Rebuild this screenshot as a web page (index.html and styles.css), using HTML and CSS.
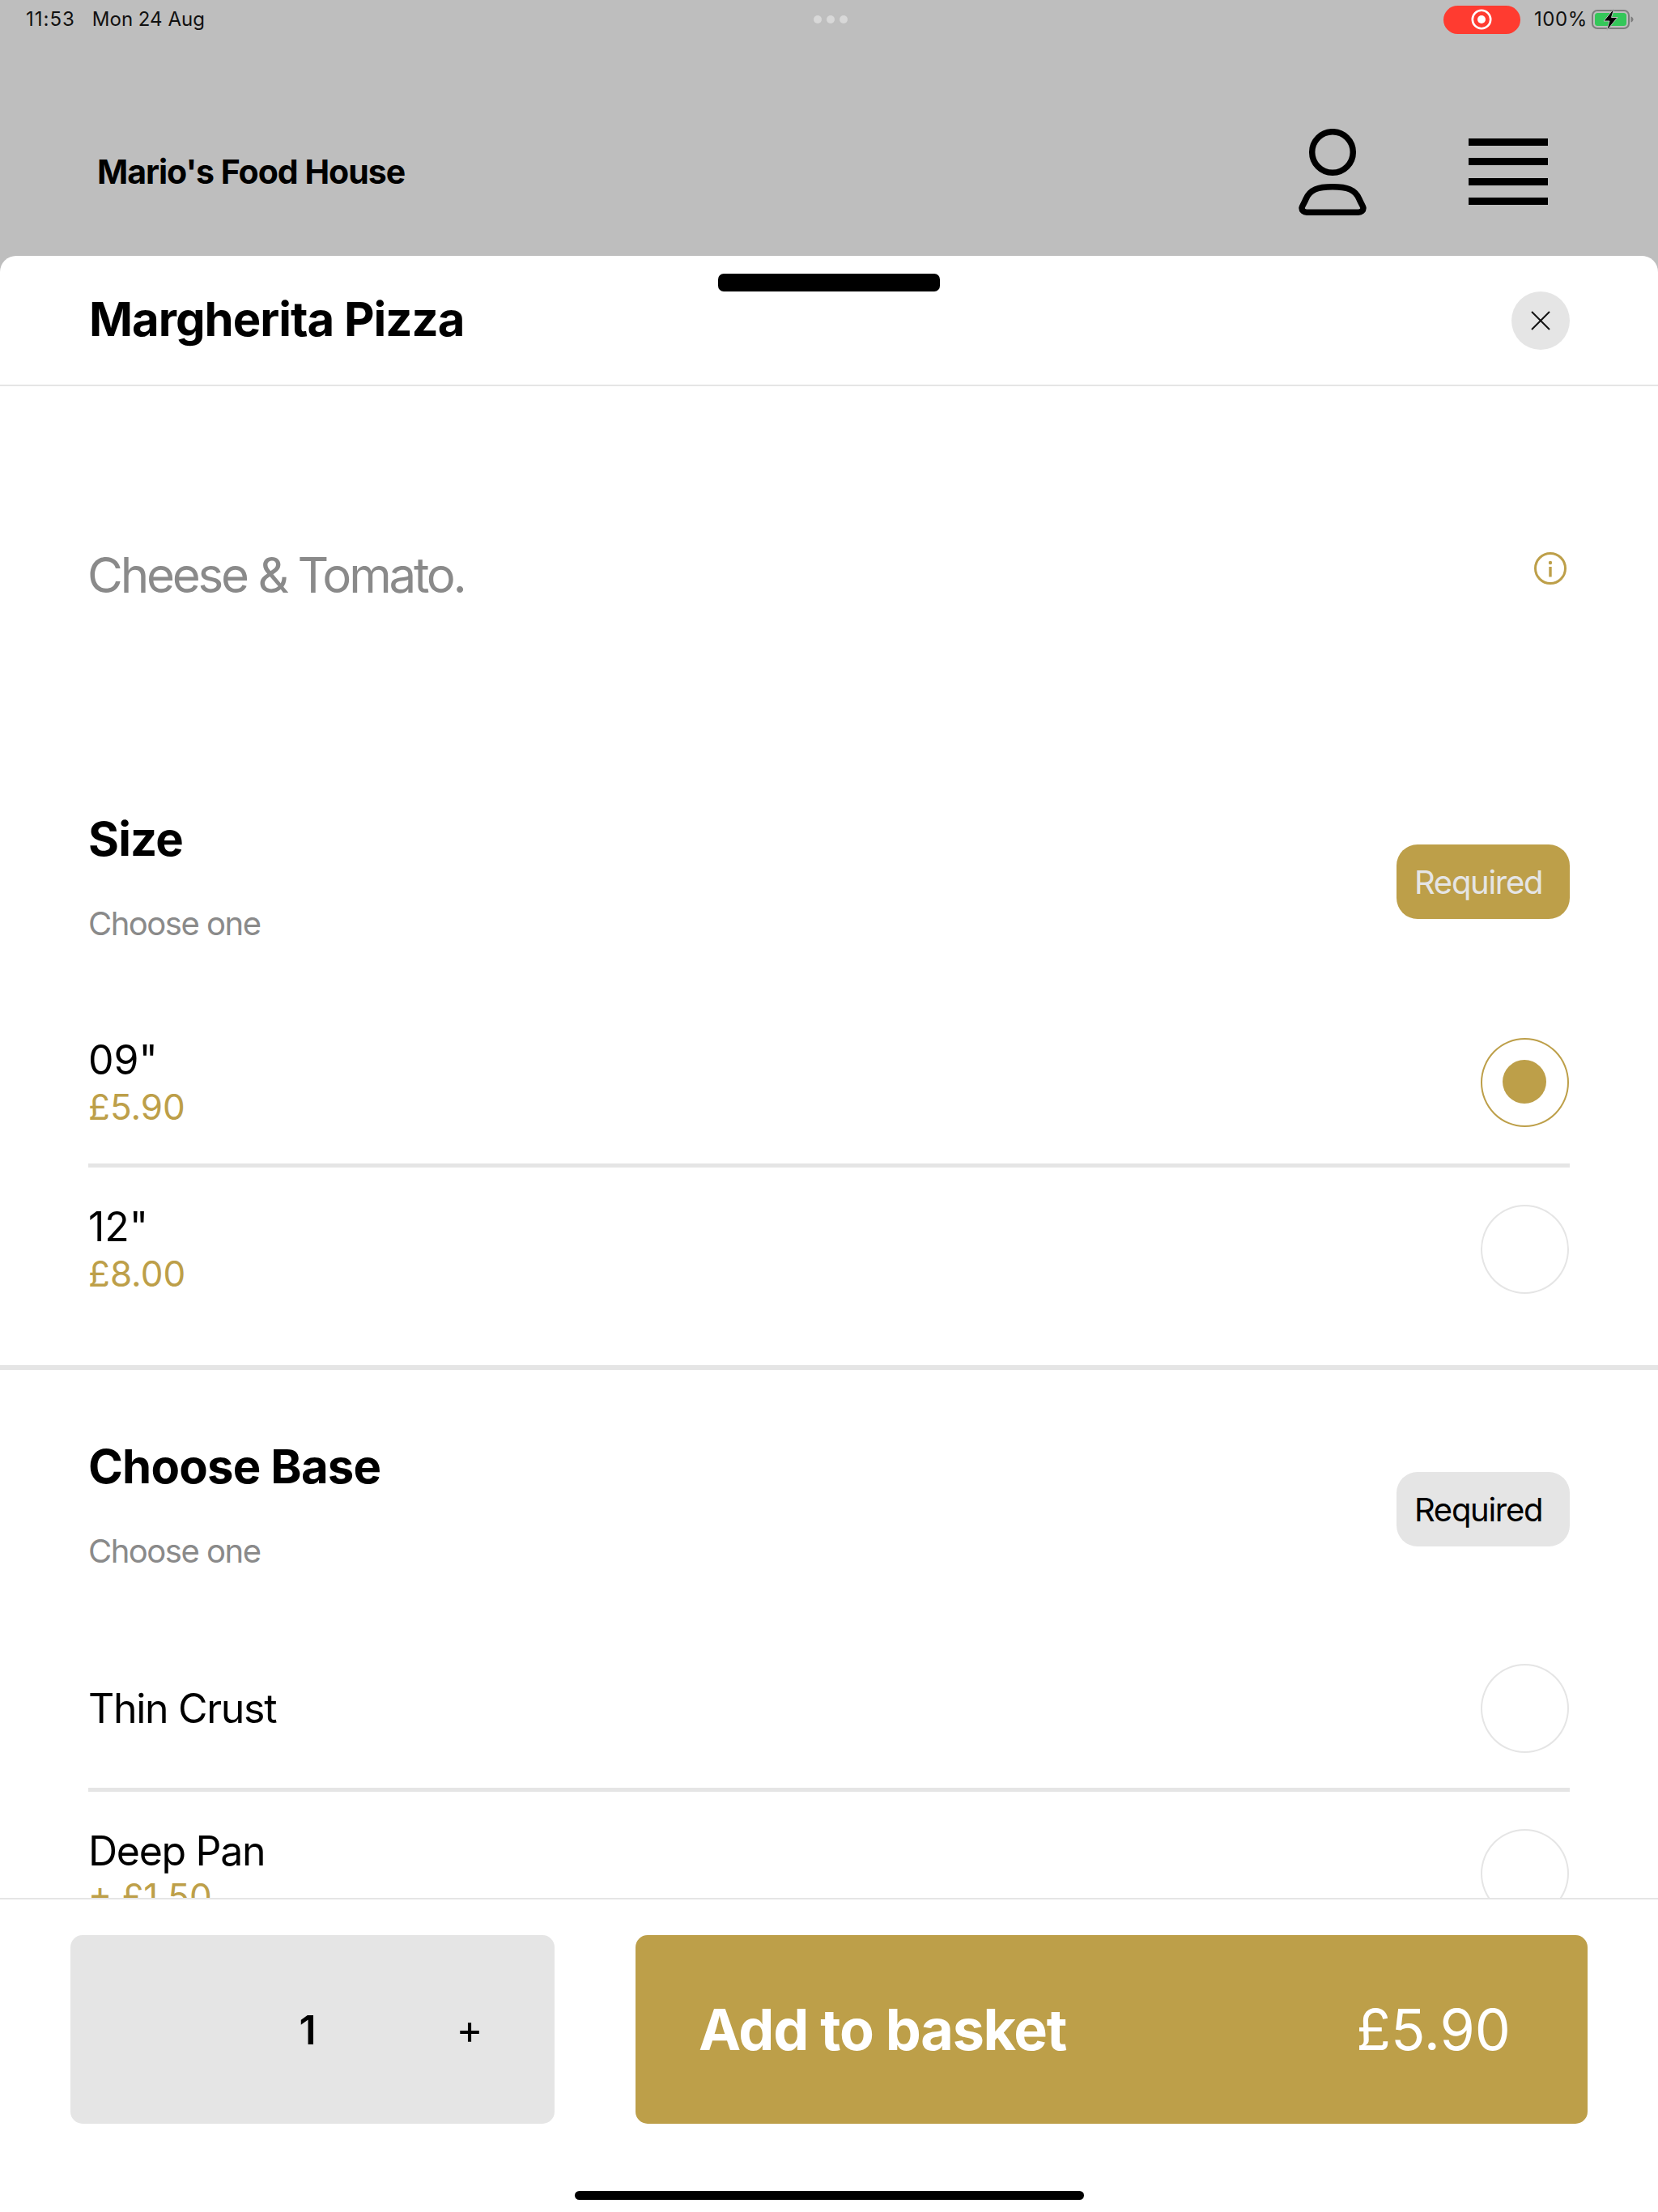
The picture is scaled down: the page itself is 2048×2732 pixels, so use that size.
FILE: index.html
```html
<!DOCTYPE html>
<html lang="en">
<head>
<meta charset="utf-8">
<title>Margherita Pizza</title>
<link rel="stylesheet" href="styles.css">
</head>
<body>
<div class="app">
  <header class="top">
    <div class="status">
      <div class="status-left"><span class="time">11:53</span><span>Mon 24 Aug</span></div>
      <div class="dots"><i></i><i></i><i></i></div>
      <div class="status-right">
        <span class="rec">
          <svg class="rec-icon" viewBox="0 0 26 26" width="26" height="26"><circle cx="13" cy="13" r="11.2" fill="none" stroke="#fff" stroke-width="2.6"/><circle cx="13" cy="13" r="5" fill="#fff"/></svg>
        </span>
        <span class="pct">100%</span>
        <svg class="battery" viewBox="0 0 54 30" width="54" height="30">
          <rect x="1" y="4" width="45" height="22" rx="6" fill="none" stroke="#7d7d7d" stroke-width="2"/>
          <rect x="4" y="7" width="39" height="16" rx="3.5" fill="#34c759"/>
          <path d="M48.5 11.5c2 .6 3 2 3 3.5s-1 2.9-3 3.5z" fill="#7d7d7d"/>
          <path d="M28 1 15 17h7l-3.5 12L32 12.5h-7.5z" fill="#000" stroke="#bebebe" stroke-width="1"/>
        </svg>
      </div>
    </div>
    <div class="brandbar">
      <div class="brand">Mario's Food House</div>
      <div class="brand-icons">
        <svg class="person" viewBox="0 0 84 107" width="84" height="107" fill="none" stroke="#000" stroke-width="7.5">
          <circle cx="42" cy="29" r="25.3"/>
          <path d="M42 71.8C60 71.8 70 75 75 87c2 5 5 9 5 11 0 3-2.5 5.2-6 5.2H10c-3.5 0-6-2.2-6-5.2 0-2 3-6 5-11C14 75 24 71.8 42 71.8z"/>
        </svg>
        <div class="burger"><i></i><i></i><i></i><i></i></div>
      </div>
    </div>
  </header>

  <main class="sheet">
    <div class="handle"></div>
    <div class="sheet-head">
      <h1 class="title">Margherita Pizza</h1>
      <button class="close" aria-label="Close">
        <svg viewBox="0 0 24 24" width="24" height="24" fill="none" stroke="#111" stroke-width="2"><path d="M1 1l22 22M23 1L1 23"/></svg>
      </button>
    </div>

    <div class="scroll">
      <div class="desc">
        <p class="desc-text">Cheese &amp; Tomato.</p>
        <svg class="info" viewBox="0 0 40 40" width="40" height="40">
          <circle cx="20" cy="20" r="18.5" fill="none" stroke="#bd9f49" stroke-width="3"/>
          <circle cx="20" cy="13" r="2.2" fill="#bd9f49"/>
          <rect x="18.3" y="18" width="3.4" height="12.5" fill="#bd9f49"/>
        </svg>
      </div>

      <section class="group">
        <div class="group-head">
          <div>
            <h2 class="group-title">Size</h2>
            <p class="group-sub">Choose one</p>
          </div>
          <span class="badge badge-active">Required</span>
        </div>
        <div class="option">
          <div class="opt-text"><div class="opt-name opt-num">09"</div><div class="opt-price">£5.90</div></div>
          <span class="radio radio-on"></span>
        </div>
        <div class="option">
          <div class="opt-text"><div class="opt-name opt-num">12"</div><div class="opt-price">£8.00</div></div>
          <span class="radio"></span>
        </div>
      </section>

      <section class="group">
        <div class="group-head">
          <div>
            <h2 class="group-title">Choose Base</h2>
            <p class="group-sub">Choose one</p>
          </div>
          <span class="badge">Required</span>
        </div>
        <div class="option option-plain">
          <div class="opt-text"><div class="opt-name">Thin Crust</div></div>
          <span class="radio"></span>
        </div>
        <div class="option option-raised">
          <div class="opt-text"><div class="opt-name">Deep Pan</div><div class="opt-price">+ £1.50</div></div>
          <span class="radio"></span>
        </div>
      </section>
    </div>

    <footer class="foot">
      <div class="actions">
        <div class="stepper"><span></span><span class="qty">1</span><span class="plus">+</span></div>
        <button class="add"><span class="add-label">Add to basket</span><span class="add-price">£5.90</span></button>
      </div>
      <div class="home"></div>
    </footer>
  </main>
</div>
</body>
</html>
```
FILE: styles.css
```css
* { box-sizing: border-box; }
html, body { margin: 0; padding: 0; background: #fff; }
body { font-family: "Inter", "Liberation Sans", sans-serif; color: #000; }
h1, h2, p { margin: 0; }

.app { width: 2048px; height: 2732px; display: flex; flex-direction: column; overflow: hidden; background: #bebebe; }

.top { height: 316px; flex: none; display: flex; flex-direction: column; }
.status { height: 48px; padding: 0 28px 0 32px; display: grid; grid-template-columns: 1fr auto 1fr; align-items: center; font-size: 24px; line-height: 30px; color: #111; }
.status-left { display: flex; gap: 21px; }
.time { letter-spacing: 1px; }
.dots { display: flex; gap: 6px; }
.dots i { width: 10px; height: 10px; border-radius: 50%; background: #d8d8d8; }
.status-right { display: flex; justify-content: flex-end; align-items: center; }
.rec { width: 95px; height: 35px; border-radius: 18px; background: #ff3b30; display: flex; align-items: center; justify-content: center; margin-right: 17px; }
.pct { margin-right: 5px; letter-spacing: 0.6px; }
.battery { display: block; }

.brandbar { flex: 1; display: flex; align-items: center; justify-content: space-between; padding: 60px 136px 0 120px; }
.brand { font-size: 41px; font-weight: 700; line-height: 50px; letter-spacing: -1px; }
.brand-icons { display: flex; align-items: center; gap: 126px; }
.person { display: block; }
.burger { width: 98px; display: flex; flex-direction: column; gap: 15.5px; }
.burger i { display: block; height: 9px; background: #000; }

.sheet { position: relative; flex: 1; min-height: 0; background: #fff; border-radius: 20px 20px 0 0; display: flex; flex-direction: column; }
.handle { position: absolute; top: 22px; left: 887px; width: 274px; height: 22px; border-radius: 7px; background: #000; }
.sheet-head { height: 161px; flex: none; padding: 0 109px 4px 110px; display: flex; align-items: center; justify-content: space-between; border-bottom: 2px solid #e5e5e5; }
.title { font-size: 58px; font-weight: 700; line-height: 70px; letter-spacing: -1px; }
.close { width: 72px; height: 72px; margin-top: 4px; padding: 0; border: 0; border-radius: 50%; background: #e5e5e5; display: flex; align-items: center; justify-content: center; }

.scroll { flex: 1; min-height: 0; overflow: hidden; }
.desc { height: 440px; padding: 197px 113px 0 108px; display: flex; align-items: flex-start; justify-content: space-between; }
.desc-text { font-size: 60px; line-height: 72px; letter-spacing: -3.2px; color: #8a8a8a; }
.info { display: block; margin-top: 8px; }

.group { padding: 84px 109px 43px; border-bottom: 6px solid #e5e5e5; }
.group-head { display: flex; align-items: center; justify-content: space-between; margin-bottom: 71px; }
.group-title { font-size: 58px; font-weight: 700; line-height: 70px; letter-spacing: -0.8px; }
.group-sub { margin-top: 46px; font-size: 40px; line-height: 48px; letter-spacing: -1.5px; color: #8a8a8a; }
.badge { width: 214px; height: 92px; margin-top: 12px; padding: 2px 0 0 22px; border-radius: 26px; background: #e5e5e5; display: flex; align-items: center; font-size: 40px; line-height: 48px; letter-spacing: -1.3px; }
.badge-active { background: #bd9f49; color: #e5e5e5; }

.option { height: 201px; display: flex; align-items: center; justify-content: space-between; }
.option + .option { box-sizing: content-box; border-top: 5px solid #e5e5e5; }
.option-plain { height: 197px; }
.option-raised .opt-text { margin-top: -4px; }
.opt-name { font-size: 50px; line-height: 60px; letter-spacing: -1.3px; }
.opt-num { margin: -2px 0 2px; letter-spacing: 0; }
.opt-price { font-size: 44px; line-height: 52px; color: #bd9f49; }
.radio { position: relative; width: 109px; height: 110px; margin-right: 1px; border-radius: 50%; border: 2px solid #e5e5e5; }
.radio-on { border-color: #bd9f49; }
.radio-on::after { content: ""; position: absolute; top: 25px; left: 25px; width: 54px; height: 54px; border-radius: 50%; background: #bd9f49; }

.foot { position: relative; flex: none; height: 388px; background: #fff; border-top: 2px solid #e5e5e5; }
.actions { padding: 44px 87px 0 87px; display: flex; gap: 100px; }
.stepper { width: 598px; height: 233px; border-radius: 15px; background: #e5e5e5; display: grid; grid-template-columns: 193px 200px 200px; align-items: center; justify-items: center; }
.qty { font-size: 50px; font-weight: 600; line-height: 60px; }
.plus { font-size: 50px; line-height: 60px; margin-top: -1px; }
.add { flex: 1; height: 233px; padding: 0 95px 0 78px; border: 0; border-radius: 15px; background: #bd9f49; color: #fff; font-family: inherit; display: flex; align-items: center; justify-content: space-between; font-size: 70px; line-height: 84px; }
.add-label { font-weight: 700; letter-spacing: -1.3px; }
.add-price { font-weight: 400; }
.home { position: absolute; left: 710px; top: 360px; width: 629px; height: 11px; border-radius: 6px; background: #000; }
```
